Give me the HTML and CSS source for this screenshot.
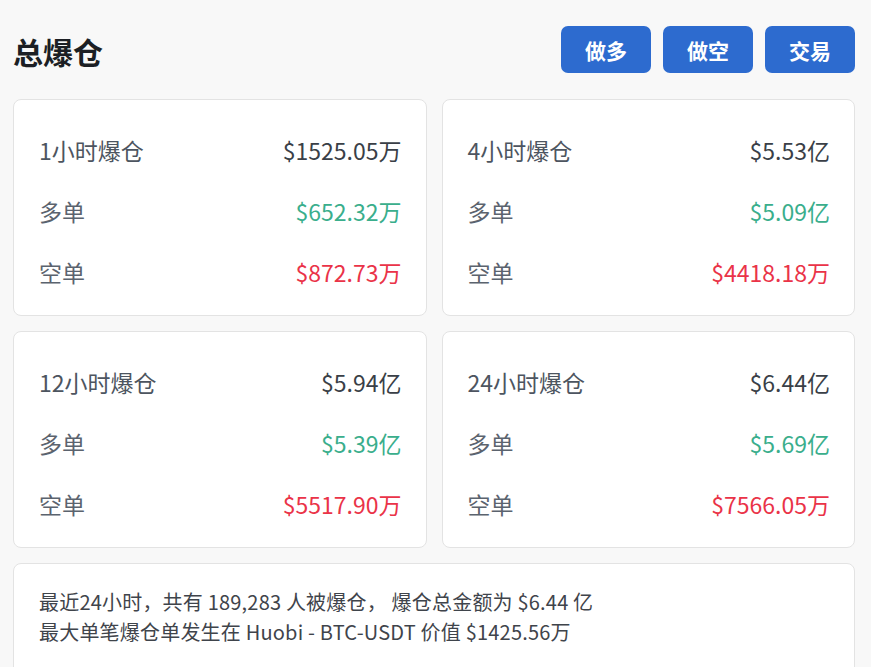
FILE: index.html
```html
<!DOCTYPE html>
<html lang="zh-CN">
<head>
<meta charset="utf-8">
<title>总爆仓</title>
<link rel="stylesheet" href="styles.css">
</head>
<body>
<div class="page">
  <div class="header">
    <h1 class="title">总爆仓</h1>
    <div class="actions">
      <button class="btn">做多</button>
      <button class="btn">做空</button>
      <button class="btn">交易</button>
    </div>
  </div>
  <div class="grid">
    <div class="card">
      <div class="row"><span class="label strong">1小时爆仓</span><span class="val total">$1525.05万</span></div>
      <div class="row"><span class="label">多单</span><span class="val up">$652.32万</span></div>
      <div class="row"><span class="label">空单</span><span class="val down">$872.73万</span></div>
    </div>
    <div class="card">
      <div class="row"><span class="label strong">4小时爆仓</span><span class="val total">$5.53亿</span></div>
      <div class="row"><span class="label">多单</span><span class="val up">$5.09亿</span></div>
      <div class="row"><span class="label">空单</span><span class="val down">$4418.18万</span></div>
    </div>
    <div class="card">
      <div class="row"><span class="label strong">12小时爆仓</span><span class="val total">$5.94亿</span></div>
      <div class="row"><span class="label">多单</span><span class="val up">$5.39亿</span></div>
      <div class="row"><span class="label">空单</span><span class="val down">$5517.90万</span></div>
    </div>
    <div class="card">
      <div class="row"><span class="label strong">24小时爆仓</span><span class="val total">$6.44亿</span></div>
      <div class="row"><span class="label">多单</span><span class="val up">$5.69亿</span></div>
      <div class="row"><span class="label">空单</span><span class="val down">$7566.05万</span></div>
    </div>
  </div>
  <div class="summary">
    <p>最近24小时，共有 189,283 人被爆仓， 爆仓总金额为 $6.44 亿</p>
    <p>最大单笔爆仓单发生在 Huobi - BTC-USDT 价值 $1425.56万</p>
  </div>
</div>
</body>
</html>
```
FILE: styles.css
```css
* { box-sizing: border-box; }
html, body {
  margin: 0;
  padding: 0;
  background: #f8f8f8;
  font-family: "Noto Sans CJK SC", "Noto Sans", sans-serif;
  overflow: hidden;
}
.page {
  padding: 0 16px 0 13px;
}
.header {
  display: flex;
  align-items: center;
  justify-content: space-between;
  height: 47px;
  margin: 26px 0 26px 0;
}
.title {
  margin: 0;
  font-size: 30px;
  font-weight: 700;
  color: #1c1f24;
  line-height: 1;
  padding-top: 2px;
}
.actions {
  display: flex;
  gap: 12px;
}
.btn {
  width: 90px;
  height: 47px;
  border: 0;
  border-radius: 7px;
  background: #2d6bcf;
  color: #fff;
  font-family: "Noto Sans CJK SC", sans-serif;
  font-size: 21px;
  font-weight: 700;
  padding: 0;
}
.grid {
  display: grid;
  grid-template-columns: 1fr 1fr;
  gap: 15px 15px;
}
.card {
  background: #fff;
  border: 1px solid #e3e3e3;
  border-radius: 8px;
  padding: 19px 24px 13px 25px;
  height: 217px;
}
.row {
  display: flex;
  justify-content: space-between;
  align-items: center;
  height: 61px;
  font-size: 23px;
}
.label {
  color: #5b636e;
}
.label.strong {
  color: #4d5560;
}
.val.total { color: #3a3f47; }
.val.up { color: #3aae8c; }
.val.down { color: #ea3348; }
.summary {
  margin-top: 15px;
  background: #fff;
  border: 1px solid #e3e3e3;
  border-radius: 8px;
  padding: 23px 25px 30px 25px;
  height: 140px;
}
.summary p {
  margin: 0;
  font-size: 20px;
  line-height: 30px;
  letter-spacing: 0.2px;
  color: #3f444b;
}
```
